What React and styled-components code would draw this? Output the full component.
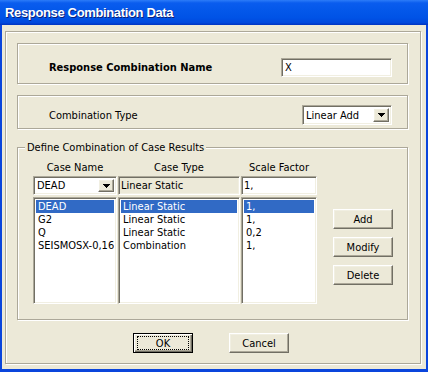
import React from 'react';
import styled, { createGlobalStyle, css } from 'styled-components';

const FONT = `"DejaVu Sans Condensed", "DejaVu Sans", "Liberation Sans", sans-serif`;

const GlobalStyle = createGlobalStyle`
  html, body { margin: 0; padding: 0; background: #ECE9D8; }
  body { font-family: ${FONT}; font-stretch: condensed; font-size: 11px; color: #000; }
  * { box-sizing: border-box; }
`;

const sunken = css`
  border: 1px solid;
  border-color: #ACA899 #fff #fff #ACA899;
  box-shadow: inset 1px 1px 0 #716F64, inset -1px -1px 0 #F1EFE2;
`;

const raised = css`
  border: 1px solid;
  border-color: #fff #716F64 #716F64 #fff;
  box-shadow: inset -1px -1px 0 #ACA899, inset 1px 1px 0 #F1EFE2;
`;

const etched = css`
  border: 1px solid #ACA899;
  box-shadow: inset 1px 1px 0 #fff, 1px 1px 0 #fff;
`;

const Window = styled.div`
  width: 428px;
  height: 372px;
  background: #0A45DC;
  display: flex;
  flex-direction: column;
`;

const TitleBar = styled.div`
  height: 25px;
  flex: none;
  display: flex;
  align-items: center;
  padding-left: 5px;
  background: linear-gradient(180deg, #2C7CF8 0%, #0A5CEE 12%, #0458EA 40%, #0053E6 70%, #0049DD 90%, #0033C0 100%);
  color: #fff;
  font-family: "Liberation Sans", Arial, sans-serif;
  font-weight: bold;
  font-size: 13px;
  letter-spacing: -0.35px;
  text-shadow: 1px 1px 0 #0B1F78;
  font-stretch: normal;
`;

const Body = styled.div`
  flex: 1;
  margin: 0 2px 3px 2px;
  background: #ECE9D8;
  padding: 6px 5px 5px 3px;
  display: flex;
`;

const Frame = styled.div`
  flex: 1;
  ${etched};
  padding: 11px 12px 0 11px;
  display: flex;
  flex-direction: column;
`;

const Panel = styled.div`
  ${etched};
  height: ${p => p.$h}px;
  display: flex;
  justify-content: space-between;
  align-items: flex-start;
  padding: ${p => p.$pt}px 15px 0 31px;
  & + & { margin-top: 11px; }
`;

const Label = styled.div`
  font-weight: ${p => (p.$bold ? 'bold' : 'normal')};
  line-height: 13px;
  margin-top: ${p => p.$mt}px;
  white-space: nowrap;
`;

const TextBox = styled.div`
  ${sunken};
  width: ${p => p.$w}px;
  height: ${p => p.$h || 19}px;
  background: ${p => (p.$readonly ? '#ECE9D8' : '#fff')};
  padding: 0 2px 0 ${p => p.$pl || 3}px;
  display: flex;
  align-items: center;
  line-height: 13px;
  white-space: nowrap;
  overflow: hidden;
  flex: none;
`;

const Combo = styled.div`
  ${sunken};
  width: ${p => p.$w}px;
  height: ${p => p.$h || 20}px;
  background: #fff;
  padding: 2px 2px 2px 3px;
  display: flex;
  align-items: center;
  justify-content: space-between;
  line-height: 13px;
  flex: none;
`;

const DropButton = styled.div`
  ${raised};
  width: 16px;
  align-self: stretch;
  background: #ECE9D8;
  display: flex;
  align-items: center;
  justify-content: center;
  flex: none;
`;

const Arrow = () => (
  <svg width="7" height="4" viewBox="0 0 7 4" shapeRendering="crispEdges">
    <path d="M0 0h7v1H0zM1 1h5v1H1zM2 2h3v1H2zM3 3h1v1H3z" fill="#000" />
  </svg>
);

const Group = styled.fieldset`
  margin: 12px 0 0 0;
  ${etched};
  padding: 7px 0 15px 0;
  min-width: 0;
`;

const Legend = styled.legend`
  margin-left: 7px;
  padding: 0 2px;
  line-height: 13px;
  background: #ECE9D8;
`;

const GroupContent = styled.div`
  display: flex;
  padding-left: 15px;
`;

const Table = styled.div`
  display: grid;
  grid-template-columns: 84px 122px 76px;
  grid-template-rows: 15px 19px 109px;
  column-gap: 1px;
`;

const Head = styled.div`
  text-align: center;
  line-height: 13px;
  white-space: nowrap;
`;

const List = styled.div`
  ${sunken};
  background: #fff;
  padding: 2px;
  overflow: hidden;
  height: 107px;
  margin-top: 2px;
`;

const Row = styled.div`
  height: 13px;
  line-height: 13px;
  padding-left: 2px;
  white-space: nowrap;
  overflow: hidden;
  background: ${p => (p.$sel ? '#316AC5' : 'transparent')};
  color: ${p => (p.$sel ? '#fff' : '#000')};
`;

const SideButtons = styled.div`
  display: flex;
  flex-direction: column;
  gap: 8px;
  margin: 48px 0 0 16px;
`;

const Button = styled.div`
  ${raised};
  width: 60px;
  height: 20px;
  background: #ECE9D8;
  display: flex;
  align-items: center;
  justify-content: center;
  line-height: 13px;
`;

const DefaultButton = styled.div`
  width: 60px;
  height: 20px;
  border: 1px solid #000;
  box-shadow: inset 1px 1px 0 #fff, inset -1px -1px 0 #716F64, inset -2px -2px 0 #ACA899;
  background: #ECE9D8;
  padding: 2px 3px 2px 3px;
  display: flex;
`;

const Focus = styled.div`
  flex: 1;
  border: 1px dotted #000;
  display: flex;
  align-items: center;
  justify-content: center;
  line-height: 13px;
`;

const Footer = styled.div`
  display: flex;
  justify-content: center;
  gap: 36px;
  margin-top: 13px;
  padding-right: 3px;
`;

const caseRows = [
  ['DEAD', 'Linear Static', '1,'],
  ['G2', 'Linear Static', '1,'],
  ['Q', 'Linear Static', '0,2'],
  ['SEISMOSX-0,16', 'Combination', '1,'],
];

export default function App() {
  return (
    <>
      <GlobalStyle />
      <Window>
        <TitleBar>Response Combination Data</TitleBar>
        <Body>
          <Frame>
            <Panel $h={41} $pt={14}>
              <Label $bold $mt={3}>Response Combination Name</Label>
              <TextBox $w={111}>X</TextBox>
            </Panel>
            <Panel $h={34} $pt={9}>
              <Label $mt={4}>Combination Type</Label>
              <Combo $w={90}>
                <span>Linear Add</span>
                <DropButton><Arrow /></DropButton>
              </Combo>
            </Panel>
            <Group>
              <Legend>Define Combination of Case Results</Legend>
              <GroupContent>
                <Table>
                  <Head>Case Name</Head>
                  <Head>Case Type</Head>
                  <Head>Scale Factor</Head>
                  <Combo $w={84} $h={19}>
                    <span>DEAD</span>
                    <DropButton><Arrow /></DropButton>
                  </Combo>
                  <TextBox $w={122} $readonly $pl={2}>Linear Static</TextBox>
                  <TextBox $w={76} $pl={2}>1,</TextBox>
                  {[0, 1, 2].map(col => (
                    <List key={col}>
                      {caseRows.map((r, i) => (
                        <Row key={i} $sel={i === 0}>{r[col]}</Row>
                      ))}
                    </List>
                  ))}
                </Table>
                <SideButtons>
                  <Button>Add</Button>
                  <Button>Modify</Button>
                  <Button>Delete</Button>
                </SideButtons>
              </GroupContent>
            </Group>
            <Footer>
              <DefaultButton><Focus>OK</Focus></DefaultButton>
              <Button>Cancel</Button>
            </Footer>
          </Frame>
        </Body>
      </Window>
    </>
  );
}
